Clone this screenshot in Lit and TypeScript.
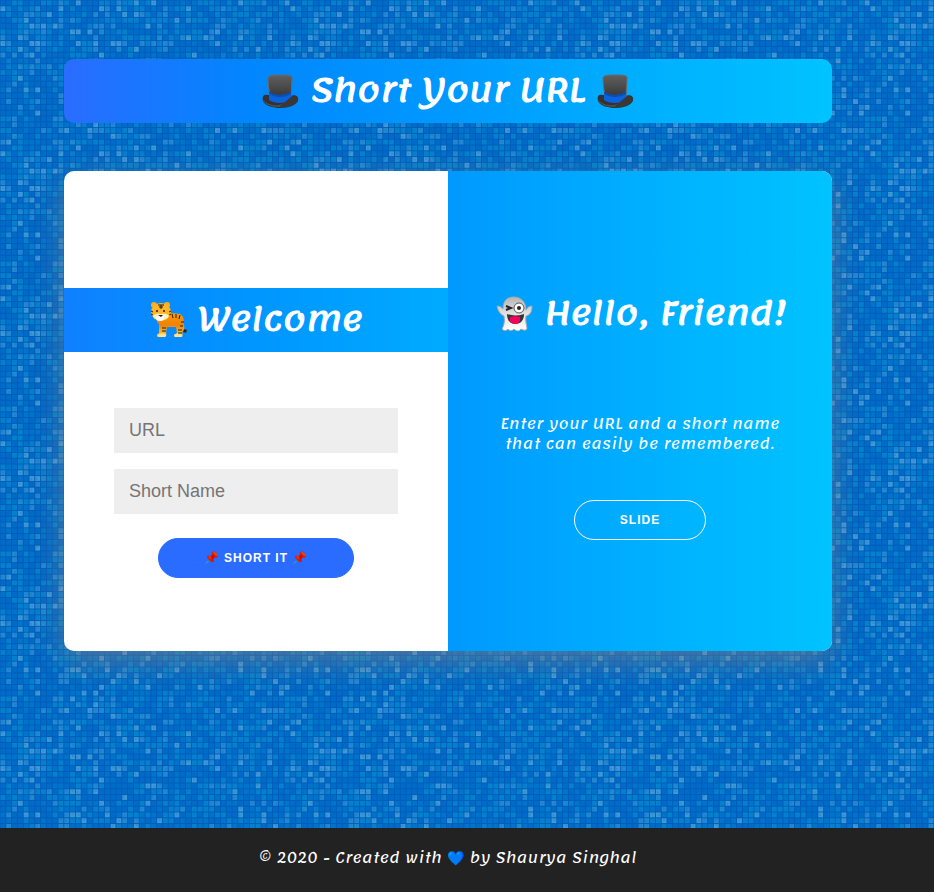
import { LitElement, html, css, svg } from "lit";
import { customElement } from "lit/decorators.js";

const COLUMNS = 50;
const ROWS = 25;

/* Mosaic cells with a repeatable pseudo-random shade. */
function mosaicCells() {
  let seed = 20207;
  const next = () => {
    seed = (seed * 1664525 + 1013904223) % 4294967296;
    return seed / 4294967296;
  };
  const cells = [];
  for (let row = 0; row < ROWS; row++) {
    for (let col = 0; col < COLUMNS; col++) {
      const n = next();
      const shade = n < 0.34 ? "c0" : n < 0.56 ? "c1" : n < 0.82 ? "c2" : n < 0.93 ? "c3" : "c4";
      cells.push(svg`<rect class=${shade} x=${col * 12 + 1} y=${row * 12 + 1} width="10" height="10"></rect>`);
      if (n > 0.5) {
        const sx = col * 12 + 2 + Math.floor(next() * 4);
        const sy = row * 12 + 2 + Math.floor(next() * 4);
        cells.push(svg`<rect class="speck" x=${sx} y=${sy} width="4" height="4"></rect>`);
      }
    }
  }
  return cells;
}

@customElement("mosaic-backdrop")
export class MosaicBackdrop extends LitElement {
  static styles = css`
    :host { display: block; }
    svg { display: block; width: 100%; height: 100%; }
    .grout { fill: #005cb8; }
    .c0 { fill: #006bc8; }
    .c1 { fill: #0074cb; }
    .c2 { fill: #0482ce; }
    .c3 { fill: #2489d1; }
    .c4 { fill: #4099d6; }
    .speck { fill: #0070ca; opacity: 0.3; }
  `;
  render() {
    return html`<svg aria-hidden="true">
      <defs>
        <pattern id="tiles" width="290" height="145" patternUnits="userSpaceOnUse" viewBox="0 0 600 300">
          <rect class="grout" width="600" height="300"></rect>
          ${mosaicCells()}
        </pattern>
      </defs>
      <rect width="100%" height="100%" fill="url(#tiles)"></rect>
    </svg>`;
  }
}

const hat = html`<svg class="emoji" viewBox="0 0 37 37" role="img" aria-label="Top hat">
  <defs>
    <linearGradient id="felt" x1="0" y1="0" x2="0" y2="1">
      <stop offset="0" stop-color="#606060"></stop><stop offset="1" stop-color="#303030"></stop>
    </linearGradient>
  </defs>
  <path fill="#333" d="M6 23C1 22 0 25 1 29c2 5 11 7 17 7 9 0 17-3 18-8 1-4-3-6-8-4z"></path>
  <path fill="#505050" d="M1 27c2 4 9 7 16 6l10-3 9-4c0 6-9 9-18 9S1 32 1 27z"></path>
  <path fill="url(#felt)" stroke="#6a6a6a" d="M6 6c0-3 6-3 12-3s13 0 12 3c0 6-1 12-1 19-1 5-20 5-21 0C7 18 6 12 6 6z"></path>
  <path fill="#0b62dd" d="M7 20c5 4 15 4 22 0v8c-5 4-17 4-22 0z"></path>
  <path fill="#084db8" d="M7 20c5 4 15 4 22 0v2c-7 4-15 4-22 0z"></path>
  <path fill="#383838" d="m18 34 11-9c4-2 8 0 7 3-1 5-9 7-18 8z"></path>
</svg>`;

const tiger = html`<svg class="emoji" viewBox="0 0 37 37" role="img" aria-label="Tiger">
  <defs>
    <linearGradient id="fur" x1="0" y1="0" x2="0" y2="1">
      <stop offset="0" stop-color="#ff9800"></stop><stop offset="0.5" stop-color="#ef8205"></stop><stop offset="1" stop-color="#ffd24a"></stop>
    </linearGradient>
  </defs>
  <path fill="none" stroke="#f4a020" stroke-width="3" stroke-linecap="round" d="M32 22c2 3-1 8 3 8"></path>
  <path fill="#222" d="m34 28 3 1-1 3-3-1z"></path>
  <path fill="url(#fur)" d="M9 15c5-2 13-4 21-2 4 2 4 7 4 11 0 3-2 4-2 7 1 3 1 5-1 5h-6c-2-1 0-3 2-4l-1-6H17l-1 6c1 2 0 4-2 4H8c-2-1-1-3 1-4V23c-3-2-3-6 0-8z"></path>
  <path fill="#ffe28a" d="M8 34c2-2 7-2 8 0 0 2-1 2-2 2H9zm16 0c2-2 7-2 8 0 0 2-1 2-2 2h-5z"></path>
  <circle cx="4" cy="4" r="3" fill="#ffad18"></circle><circle cx="17" cy="4" r="3" fill="#ffad18"></circle>
  <ellipse cx="11" cy="11" rx="10" ry="9" fill="#ffb52a"></ellipse>
  <path fill="#fff3c4" d="M3 15c2 5 13 6 16 0-3-3-5-2-8-2s-5-1-8 2z"></path>
  <ellipse cx="10" cy="17" rx="4" ry="3" fill="#fff"></ellipse>
  <path fill="#2b1c10" d="M8 14h5l-2 2z"></path>
  <circle cx="7" cy="10" r="1" fill="#2b1c10"></circle><circle cx="14" cy="10" r="1" fill="#2b1c10"></circle>
  <path fill="none" stroke="#2b1c10" d="M8 4h6M9 6h4M11 4v4M1 10l2 1M1 13l2 1M21 10l-2 1M21 13l-2 1M22 13l1 4M26 13v4M30 14l-1 4M34 21h-3M33 25h-3M12 27h4M12 30h4M28 29h4M28 32h4"></path>
</svg>`;

const ghost = html`<svg class="emoji" viewBox="0 0 37 37" role="img" aria-label="Ghost">
  <defs>
    <linearGradient id="sheet" x1="0" y1="0" x2="0" y2="1">
      <stop offset="0" stop-color="#b4b4b4"></stop><stop offset="0.5" stop-color="#e2e2e2"></stop><stop offset="1" stop-color="#fff"></stop>
    </linearGradient>
  </defs>
  <path fill="url(#sheet)" stroke="#a8a8a8" d="M7 14C7 5 12 2 18 2s12 4 12 13c2-3 3-4 6-4 0 6-2 9-6 10-1 6 1 9 1 13-2 2-4 1-6 0-2 3-5 2-7 0-2 2-5 2-6 0-2 2-4 2-6 0 2-4 3-7 2-13-4-2-6-5-7-10 3 0 4 1 6 3z"></path>
  <path fill="#333" d="M11 19c5 2 11 2 17 0 0 6-3 10-9 10-5 0-8-4-8-10z"></path>
  <path fill="#f5005c" d="M14 22c3-1 7-1 10 0 1 4-1 7-5 7s-6-3-5-7z"></path>
  <circle cx="23" cy="13" r="5" fill="#fff" stroke="#555"></circle>
  <circle cx="23" cy="13" r="2" fill="#222"></circle>
  <path fill="none" stroke="#222" stroke-width="2" d="m10 11 5 2-5 2"></path>
</svg>`;

@customElement("app-root")
export class AppRoot extends LitElement {
  static styles = css`
    :host {
      --script: "Lemonada", "Merienda", "Noto Sans", sans-serif;
      --blues: linear-gradient(to right, #2a6cff, #0087ff, #0099ff, #00afff, #00c3ff);
      position: relative;
      display: flex;
      flex-direction: column;
      min-height: 100vh;
      font-family: var(--script);
      color: #fff;
    }
    * { box-sizing: border-box; }
    mosaic-backdrop { position: absolute; inset: 0; z-index: -1; }
    h1, p { margin: 0; text-align: center; }
    h1 {
      height: 64px;
      font-size: 32px;
      font-weight: 400;
      line-height: 62px;
      white-space: nowrap;
      -webkit-text-stroke: 1px #fff;
    }
    p { font-size: 14px; line-height: 20px; letter-spacing: 0.5px; }
    .emoji { width: 37px; height: 37px; margin: 0 1px; vertical-align: -8px; }
    main {
      flex: 1;
      display: flex;
      flex-direction: column;
      gap: 48px;
      padding: 59px 102px 48px 64px;
    }
    .title { border-radius: 10px; background: var(--blues); }
    .card {
      display: grid;
      grid-template-columns: 1fr 1fr;
      min-height: 480px;
      border-radius: 10px;
      overflow: hidden;
      background: #fff;
      box-shadow: 0 10px 30px rgba(140, 130, 130, 0.55);
    }
    form, .hello { display: flex; flex-direction: column; justify-content: center; }
    form { padding-top: 44px; }
    .welcome {
      margin-bottom: 56px;
      background: linear-gradient(to right, #0f80ff, #0096ff, #00abff);
    }
    .fields { display: flex; flex-direction: column; align-items: center; gap: 16px; padding: 0 50px; }
    input {
      width: 100%;
      height: 45px;
      padding: 12px 15px;
      border: 0;
      background: #eee;
      font: 18px/21px "Liberation Sans", Arial, sans-serif;
    }
    input::placeholder { color: #757575; }
    button {
      height: 40px;
      padding: 0 45px;
      border: 1px solid #2a6cff;
      border-radius: 20px;
      background: #2a6cff;
      color: #fff;
      font: bold 12px/14px "Liberation Sans", Arial, sans-serif;
      letter-spacing: 1px;
      text-transform: uppercase;
    }
    .submit { margin-top: 8px; }
    .pin { filter: saturate(2) brightness(0.85); }
    .hello {
      align-items: center;
      background: linear-gradient(to right, #0099ff, #00afff, #00c3ff);
    }
    .hello p { max-width: 304px; margin: 68px 0 46px; }
    .ghost { border-color: #fff; background: transparent; }
    footer { padding: 20px 38px 24px 0; background: #222; }
    .heart { filter: saturate(2) brightness(0.95); }
  `;
  render() {
    return html`
      <mosaic-backdrop></mosaic-backdrop>
      <main>
        <h1 class="title">${hat} Short Your URL ${hat}</h1>
        <section class="card">
          <form @submit=${(e: Event) => e.preventDefault()}>
            <h1 class="welcome">${tiger} Welcome</h1>
            <div class="fields">
              <input type="text" placeholder="URL" aria-label="URL" />
              <input type="text" placeholder="Short Name" aria-label="Short Name" />
              <button class="submit"><span class="pin">📌</span> Short It <span class="pin">📌</span></button>
            </div>
          </form>
          <div class="hello">
            <h1>${ghost} Hello, Friend!</h1>
            <p>Enter your URL and a short name that can easily be remembered.</p>
            <button class="ghost" type="button">Slide</button>
          </div>
        </section>
      </main>
      <footer><p>© 2020 - Created with <span class="heart">💙</span> by Shaurya Singhal</p></footer>
    `;
  }
}
